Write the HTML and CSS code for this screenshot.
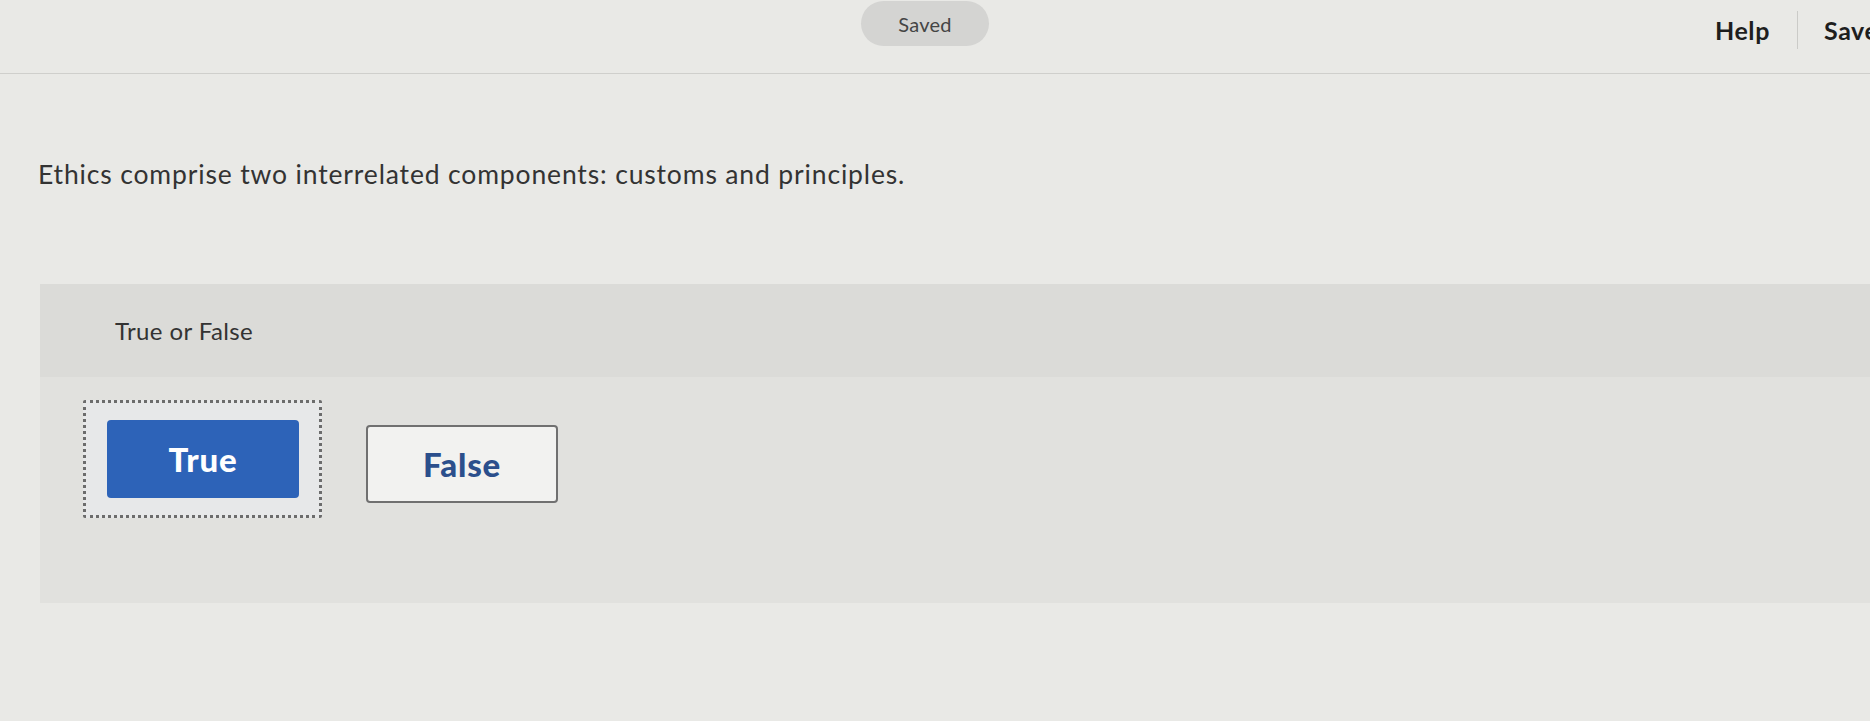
FILE: index.html
```html
<!DOCTYPE html>
<html lang="en">
<head>
<meta charset="utf-8">
<title>True or False</title>
<link rel="stylesheet" href="styles.css">
</head>
<body>
<header class="topbar">
  <div class="saved-pill">Saved</div>
  <nav class="topnav">
    <a class="nav-link">Help</a>
    <span class="nav-sep"></span>
    <a class="nav-link">Save &amp; Exit</a>
  </nav>
</header>
<main class="content">
  <p class="question">Ethics comprise two interrelated components: customs and principles.</p>
  <section class="answer-panel">
    <div class="panel-head">True or False</div>
    <div class="panel-body">
      <div class="focus-ring">
        <button class="choice choice-selected">True</button>
      </div>
      <button class="choice choice-plain">False</button>
    </div>
  </section>
</main>
</body>
</html>
```
FILE: styles.css
```css
html, body {
  margin: 0;
  padding: 0;
  overflow: hidden;
}
body {
  background: #e9e9e6;
  font-family: "Lato", "Liberation Sans", sans-serif;
  color: #2f2f2f;
  width: 1870px;
  height: 721px;
}
.topbar {
  border-bottom: 1px solid #cfcfcc;
  display: flex;
  align-items: flex-start;
  box-sizing: border-box;
  height: 74px;
}
.saved-pill {
  margin-left: 861px;
  margin-top: 1px;
  width: 128px;
  height: 45px;
  border-radius: 23px;
  background: #d4d4d2;
  color: #454545;
  font-size: 20px;
  letter-spacing: 0.3px;
  display: flex;
  align-items: center;
  justify-content: center;
}
.topnav {
  margin-left: auto;
  display: flex;
  align-items: center;
  height: 40px;
  margin-top: 10px;
  white-space: nowrap;
  margin-right: -86px;
}
.nav-link {
  font-weight: 700;
  font-size: 25px;
  letter-spacing: 0.6px;
  color: #1e1e1e;
}
.nav-sep {
  width: 1px;
  height: 38px;
  background: #cbcbc8;
  margin: 0 26px 0 27px;
}
.content {
  padding-left: 38px;
}
.question {
  margin: 84px 0 0 0;
  font-size: 26.5px;
  letter-spacing: 0.85px;
  line-height: 32px;
  color: #333;
}
.answer-panel {
  margin-top: 94px;
  margin-left: 2px;
  background: #e1e1de;
}
.panel-head {
  height: 93px;
  box-sizing: border-box;
  padding: 33px 0 0 75px;
  background: #dbdbd8;
  font-size: 24px;
  letter-spacing: 0.4px;
  line-height: 28px;
  color: #333;
}
.panel-body {
  display: flex;
  align-items: center;
  gap: 44px;
  padding: 23px 0 85px 43px;
}
.focus-ring {
  border: 3px dotted #6c6c6c;
  background: #e7e8e9;
  padding: 17px 20px 17px 21px;
  border-radius: 2px;
}
.choice {
  font-family: "Lato", "Liberation Sans", sans-serif;
  font-weight: 900;
  font-size: 33px;
  letter-spacing: 0.8px;
  width: 192px;
  height: 78px;
  border-radius: 4px;
  cursor: pointer;
  display: block;
}
.choice-selected {
  background: #2d63b8;
  color: #ffffff;
  border: none;
}
.choice-plain {
  background: #f2f2f0;
  color: #2b4f8c;
  border: 2px solid #707070;
  margin-top: 10px;
}
```
